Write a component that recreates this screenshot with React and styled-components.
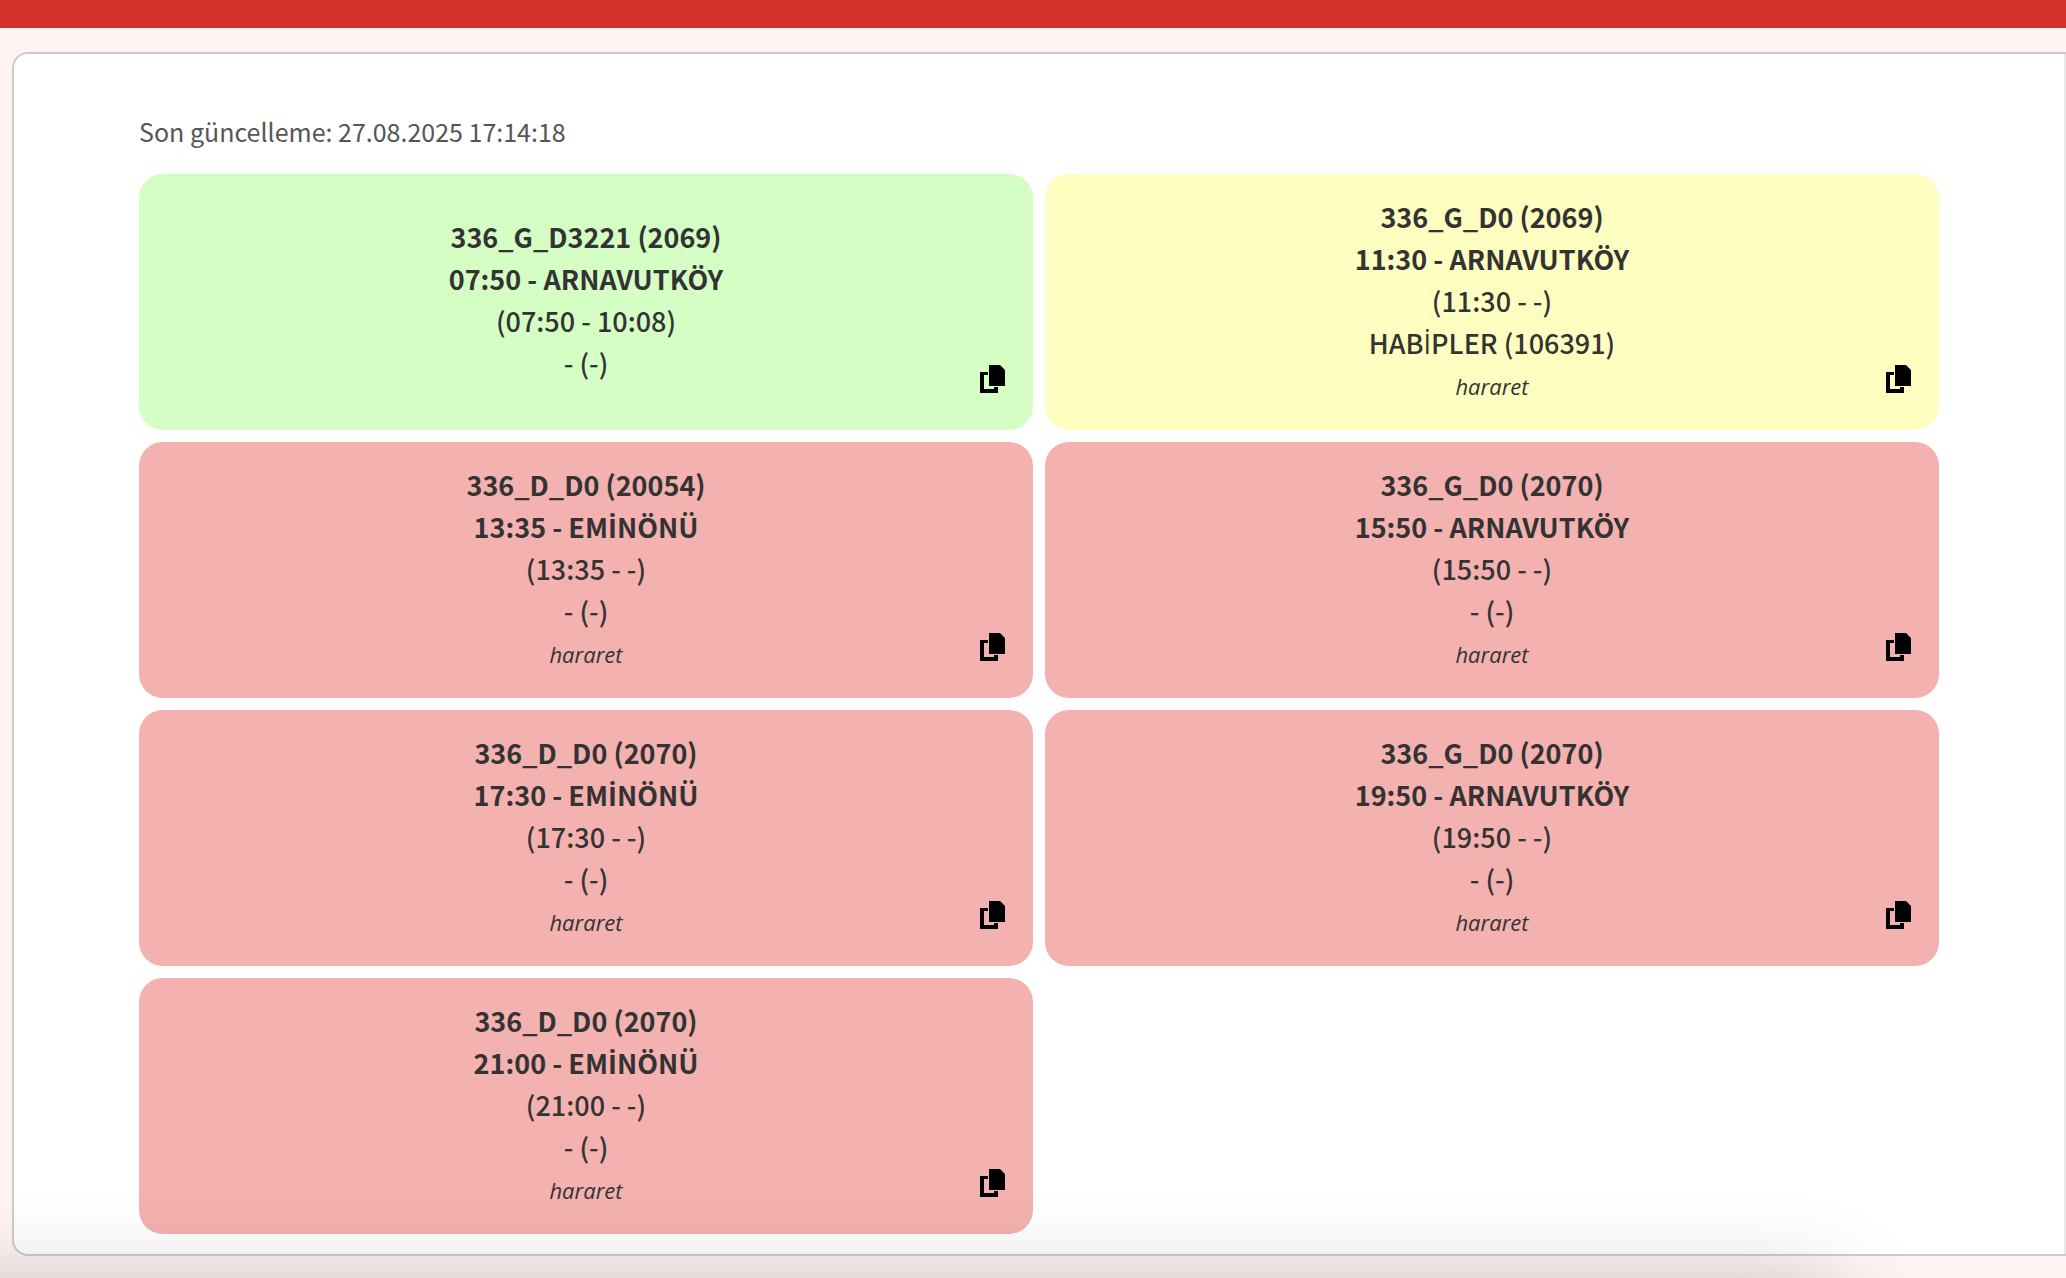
import React from "react";
import styled, { createGlobalStyle } from "styled-components";

const GlobalStyle = createGlobalStyle`
  * {
    box-sizing: border-box;
  }

  body {
    margin: 0;
    background-color: #fef4f4;
    color: #333333;
    font-family: "Source Sans Pro", "Noto Sans CJK SC", sans-serif;
    overflow: hidden;
  }
`;

const TopBar = styled.header`
  height: 28px;
  background-color: #d33129;
`;

const Panel = styled.main`
  margin-top: 24px;
  margin-left: 12px;
  border: 2px solid #cccccc;
  border-right: none;
  border-radius: 16px 0 0 16px;
  background-color: #ffffff;
  overflow: hidden;
`;

const ScrollArea = styled.div`
  padding: 55px 20px 20px;
  border-right: 2px solid #e8e8e8;
`;

const Content = styled.div`
  width: 100%;
  max-width: 1800px;
  margin: 0 auto;
`;

const LastUpdate = styled.p`
  margin: 0 0 21px;
  color: #555555;
  font-size: 25px;
  line-height: 44px;
`;

const TripGrid = styled.div`
  display: grid;
  grid-template-columns: 1fr 1fr;
  grid-auto-rows: 1fr;
  gap: 12px;
`;

const colors = {
  done: "#d4fec4",
  active: "#fdfec0",
  cancelled: "#f3b1af"
};

const Card = styled.article`
  position: relative;
  display: flex;
  flex-direction: column;
  align-items: center;
  justify-content: center;
  padding: 22px 24px 26px;
  border-radius: 24px;
  background-color: ${props => colors[props.$status]};
  text-align: center;
`;

const Line = styled.div`
  height: 42px;
  font-size: 27px;
  font-weight: ${props => (props.$bold ? 700 : 500)};
  line-height: 42px;
`;

const DottedI = styled.span`
  font-family: "Open Sans", sans-serif;
`;

const Note = styled.em`
  margin-top: 4px;
  font-family: "Open Sans", sans-serif;
  font-size: 22px;
  font-weight: 500;
  line-height: 36px;
`;

const CopyButton = styled.button`
  position: absolute;
  right: 24px;
  bottom: 31px;
  width: 32px;
  height: 36px;
  padding: 0;
  border: none;
  background: none;
  color: #000000;
  cursor: pointer;
`;

const CopySvg = styled.svg`
  display: block;
  width: 32px;
  height: 36px;
`;

const DockShadow = styled.div`
  position: fixed;
  top: calc(100% + 10px);
  left: -200px;
  right: 230px;
  height: 200px;
  border-radius: 20px;
  box-shadow: 0 0 90px rgba(0, 0, 0, 0.25);
  pointer-events: none;
`;

const trips = [
  {
    status: "done",
    code: "336_G_D3221 (2069)",
    departure: "07:50 - ARNAVUTKÖY",
    times: "(07:50 - 10:08)",
    stop: "- (-)"
  },
  {
    status: "active",
    code: "336_G_D0 (2069)",
    departure: "11:30 - ARNAVUTKÖY",
    times: "(11:30 - -)",
    stop: "HABİPLER (106391)",
    note: "hararet"
  },
  {
    status: "cancelled",
    code: "336_D_D0 (20054)",
    departure: "13:35 - EMİNÖNÜ",
    times: "(13:35 - -)",
    stop: "- (-)",
    note: "hararet"
  },
  {
    status: "cancelled",
    code: "336_G_D0 (2070)",
    departure: "15:50 - ARNAVUTKÖY",
    times: "(15:50 - -)",
    stop: "- (-)",
    note: "hararet"
  },
  {
    status: "cancelled",
    code: "336_D_D0 (2070)",
    departure: "17:30 - EMİNÖNÜ",
    times: "(17:30 - -)",
    stop: "- (-)",
    note: "hararet"
  },
  {
    status: "cancelled",
    code: "336_G_D0 (2070)",
    departure: "19:50 - ARNAVUTKÖY",
    times: "(19:50 - -)",
    stop: "- (-)",
    note: "hararet"
  },
  {
    status: "cancelled",
    code: "336_D_D0 (2070)",
    departure: "21:00 - EMİNÖNÜ",
    times: "(21:00 - -)",
    stop: "- (-)",
    note: "hararet"
  }
];

// Noto Sans CJK has no İ and puts the dot in the wrong place
const StopName = ({ children }) =>
  children.split("İ").map((part, index) => (
    <React.Fragment key={index}>
      {index > 0 && <DottedI>İ</DottedI>}
      {part}
    </React.Fragment>
  ));

const CopyIcon = () => (
  <CopySvg viewBox="0 0 32 36" aria-hidden="true">
    <path d="M12 2h11l5 5v16H12z" fill="currentColor" />
    <path d="M3 9h8v3H7v14h10v-2h4v6H3z" fill="currentColor" />
  </CopySvg>
);

class App extends React.Component {
  copyTrip = trip => {
    const { code, departure, times, stop } = trip;

    if (navigator.clipboard) {
      navigator.clipboard.writeText([code, departure, times, stop].join("\n"));
    }
  };

  render() {
    return (
      <>
        <GlobalStyle />
        <TopBar />
        <Panel>
          <ScrollArea>
            <Content>
              <LastUpdate>Son güncelleme: 27.08.2025 17:14:18</LastUpdate>
              <TripGrid>
                {trips.map(trip => (
                  <Card key={trip.departure} $status={trip.status}>
                    <Line $bold>{trip.code}</Line>
                    <Line $bold>
                      <StopName>{trip.departure}</StopName>
                    </Line>
                    <Line>{trip.times}</Line>
                    <Line>
                      <StopName>{trip.stop}</StopName>
                    </Line>
                    {trip.note && <Note>{trip.note}</Note>}
                    <CopyButton
                      type="button"
                      aria-label="Kopyala"
                      onClick={() => this.copyTrip(trip)}
                    >
                      <CopyIcon />
                    </CopyButton>
                  </Card>
                ))}
              </TripGrid>
            </Content>
          </ScrollArea>
        </Panel>
        <DockShadow />
      </>
    );
  }
}

export default App;
